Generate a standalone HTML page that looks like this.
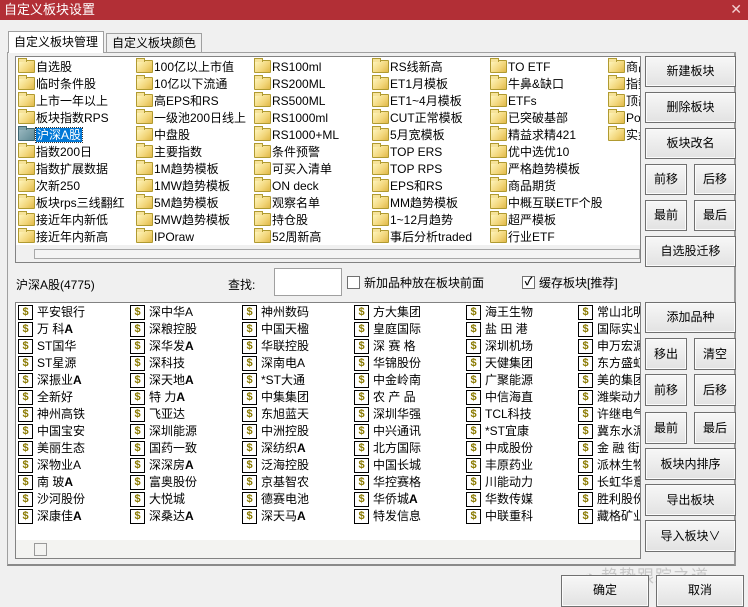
<!DOCTYPE html>
<html><head><meta charset="utf-8"><style>
*{margin:0;padding:0;box-sizing:border-box}
body{width:748px;height:604px;background:#f0f0f0;font-family:"Liberation Sans","Noto Sans CJK SC",sans-serif;font-size:12px;color:#000;position:relative;overflow:hidden}
.a{position:absolute}
.title{left:0;top:0;width:748px;height:20px;background:#b22f36;color:#fff;font-size:13px;line-height:19px;padding-left:4px}
.x{right:6px;top:1px;color:#f3d0d2;font-size:14px}
.tab{border:1px solid #a0a0a0;border-bottom:none;background:#f0f0f0;line-height:18px;padding:0 5px;font-size:12px}
.panel{left:7px;top:52px;width:729px;height:514px;border:1px solid #a0a0a0;border-right:2px solid #9a9a9a;border-bottom:2px solid #8a8a8a}
.list{background:#fff;border:1px solid #828282;overflow:hidden}
.it{position:absolute;height:17px;line-height:17px;white-space:nowrap}
.f{display:inline-block;width:17px;height:13px;vertical-align:-2px;margin-right:1px;border:1px solid #b09a30;border-radius:1px;background:linear-gradient(135deg,#fff6c0,#f2d67a 60%,#e0b848);position:relative}
.f:before{content:"";position:absolute;left:-1px;top:-3px;width:7px;height:3px;border:1px solid #b09a30;border-bottom:none;background:#f6e39a}
.fs{background:linear-gradient(135deg,#9ab8c0,#5f8a94);border-color:#3f6670}
.fs:before{background:#7ea2aa;border-color:#3f6670}
.sel{background:#0078d7;color:#fff;outline:1px dotted #333;padding:0 1px}
.col>div{height:17px;line-height:17px;position:relative;padding-left:19px}
.d{position:absolute;left:0;top:1px;width:15px;height:15px;border:1px solid #000;color:#8a7a00;font-weight:bold;font-size:11px;line-height:13px;text-align:center;font-style:normal;font-family:"Liberation Sans",sans-serif}
.btn{position:absolute;border:1px solid #707070;background:linear-gradient(#f7f7f7,#e2e2e2);text-align:center;font-size:12px;box-shadow:inset 0 0 0 1px #fbfbfb}
.cb{position:absolute;width:13px;height:13px;border:1px solid #707070;background:#fff}
</style></head><body>
<div class="a title">自定义板块设置</div>
<div class="a x">✕</div>
<div class="a tab" style="left:8px;top:31px;height:22px;line-height:21px;background:#fff;z-index:2">自定义板块管理</div>
<div class="a tab" style="left:106px;top:33px;height:19px;">自定义板块颜色</div>
<div class="a panel"></div>

<div class="a list" style="left:15px;top:56px;width:626px;height:207px">
<div style="position:relative;width:624px;height:205px;overflow:hidden">
<div class="a" style="left:0;top:188px;width:624px;height:18px;background:#f0f0f0"></div>
<div class="a" style="left:18px;top:192px;width:606px;height:10px;border:1px solid #a8a8a8;background:#f4f4f4"></div>
<div class="it" style="left:2px;top:2px"><i class="f"></i>自选股</div>
<div class="it" style="left:2px;top:19px"><i class="f"></i>临时条件股</div>
<div class="it" style="left:2px;top:36px"><i class="f"></i>上市一年以上</div>
<div class="it" style="left:2px;top:53px"><i class="f"></i>板块指数RPS</div>
<div class="it" style="left:2px;top:70px"><i class="f fs"></i><span class="sel">沪深A股</span></div>
<div class="it" style="left:2px;top:87px"><i class="f"></i>指数200日</div>
<div class="it" style="left:2px;top:104px"><i class="f"></i>指数扩展数据</div>
<div class="it" style="left:2px;top:121px"><i class="f"></i>次新250</div>
<div class="it" style="left:2px;top:138px"><i class="f"></i>板块rps三线翻红</div>
<div class="it" style="left:2px;top:155px"><i class="f"></i>接近年内新低</div>
<div class="it" style="left:2px;top:172px"><i class="f"></i>接近年内新高</div>

<div class="it" style="left:120px;top:2px"><i class="f"></i>100亿以上市值</div>
<div class="it" style="left:120px;top:19px"><i class="f"></i>10亿以下流通</div>
<div class="it" style="left:120px;top:36px"><i class="f"></i>高EPS和RS</div>
<div class="it" style="left:120px;top:53px"><i class="f"></i>一级池200日线上</div>
<div class="it" style="left:120px;top:70px"><i class="f"></i>中盘股</div>
<div class="it" style="left:120px;top:87px"><i class="f"></i>主要指数</div>
<div class="it" style="left:120px;top:104px"><i class="f"></i>1M趋势模板</div>
<div class="it" style="left:120px;top:121px"><i class="f"></i>1MW趋势模板</div>
<div class="it" style="left:120px;top:138px"><i class="f"></i>5M趋势模板</div>
<div class="it" style="left:120px;top:155px"><i class="f"></i>5MW趋势模板</div>
<div class="it" style="left:120px;top:172px"><i class="f"></i>IPOraw</div>

<div class="it" style="left:238px;top:2px"><i class="f"></i>RS100ml</div>
<div class="it" style="left:238px;top:19px"><i class="f"></i>RS200ML</div>
<div class="it" style="left:238px;top:36px"><i class="f"></i>RS500ML</div>
<div class="it" style="left:238px;top:53px"><i class="f"></i>RS1000ml</div>
<div class="it" style="left:238px;top:70px"><i class="f"></i>RS1000+ML</div>
<div class="it" style="left:238px;top:87px"><i class="f"></i>条件预警</div>
<div class="it" style="left:238px;top:104px"><i class="f"></i>可买入清单</div>
<div class="it" style="left:238px;top:121px"><i class="f"></i>ON deck</div>
<div class="it" style="left:238px;top:138px"><i class="f"></i>观察名单</div>
<div class="it" style="left:238px;top:155px"><i class="f"></i>持仓股</div>
<div class="it" style="left:238px;top:172px"><i class="f"></i>52周新高</div>

<div class="it" style="left:356px;top:2px"><i class="f"></i>RS线新高</div>
<div class="it" style="left:356px;top:19px"><i class="f"></i>ET1月模板</div>
<div class="it" style="left:356px;top:36px"><i class="f"></i>ET1~4月模板</div>
<div class="it" style="left:356px;top:53px"><i class="f"></i>CUT正常模板</div>
<div class="it" style="left:356px;top:70px"><i class="f"></i>5月宽模板</div>
<div class="it" style="left:356px;top:87px"><i class="f"></i>TOP ERS</div>
<div class="it" style="left:356px;top:104px"><i class="f"></i>TOP RPS</div>
<div class="it" style="left:356px;top:121px"><i class="f"></i>EPS和RS</div>
<div class="it" style="left:356px;top:138px"><i class="f"></i>MM趋势模板</div>
<div class="it" style="left:356px;top:155px"><i class="f"></i>1~12月趋势</div>
<div class="it" style="left:356px;top:172px"><i class="f"></i>事后分析traded</div>

<div class="it" style="left:474px;top:2px"><i class="f"></i>TO ETF</div>
<div class="it" style="left:474px;top:19px"><i class="f"></i>牛鼻&amp;缺口</div>
<div class="it" style="left:474px;top:36px"><i class="f"></i>ETFs</div>
<div class="it" style="left:474px;top:53px"><i class="f"></i>已突破基部</div>
<div class="it" style="left:474px;top:70px"><i class="f"></i>精益求精421</div>
<div class="it" style="left:474px;top:87px"><i class="f"></i>优中选优10</div>
<div class="it" style="left:474px;top:104px"><i class="f"></i>严格趋势模板</div>
<div class="it" style="left:474px;top:121px"><i class="f"></i>商品期货</div>
<div class="it" style="left:474px;top:138px"><i class="f"></i>中概互联ETF个股</div>
<div class="it" style="left:474px;top:155px"><i class="f"></i>超严模板</div>
<div class="it" style="left:474px;top:172px"><i class="f"></i>行业ETF</div>

<div class="it" style="left:592px;top:2px"><i class="f"></i>商品</div>
<div class="it" style="left:592px;top:19px"><i class="f"></i>指数</div>
<div class="it" style="left:592px;top:36px"><i class="f"></i>顶部</div>
<div class="it" style="left:592px;top:53px"><i class="f"></i>Pos</div>
<div class="it" style="left:592px;top:70px"><i class="f"></i>实盘</div>
</div></div>

<div class="a" style="left:16px;top:276px">沪深A股(4775)</div>
<div class="a" style="left:228px;top:276px">查找:</div>
<div class="a" style="left:274px;top:268px;width:68px;height:28px;background:#fff;border:1px solid #a0a0a0"></div>
<div class="cb" style="left:347px;top:276px"></div>
<div class="a" style="left:364px;top:274px">新加品种放在板块前面</div>
<div class="cb" style="left:522px;top:276px;font-size:11px;line-height:11px;text-align:center;font-weight:bold">✓</div>
<div class="a" style="left:539px;top:274px">缓存板块[推荐]</div>

<div class="a list" style="left:15px;top:302px;width:626px;height:257px">
<div style="position:relative;width:624px;height:255px;overflow:hidden">
<div class="a" style="left:0;top:237px;width:624px;height:18px;background:#f3f3f1"></div>
<div class="cb" style="left:18px;top:240px;background:transparent;border-color:#999"></div>
<div class="a" style="left:2px;top:1px;white-space:nowrap">
<div class="a col" style="left:0"><div><i class="d">$</i>平安银行</div><div><i class="d">$</i>万 科<b>A</b></div><div><i class="d">$</i>ST国华</div><div><i class="d">$</i>ST星源</div><div><i class="d">$</i>深振业<b>A</b></div><div><i class="d">$</i>全新好</div><div><i class="d">$</i>神州高铁</div><div><i class="d">$</i>中国宝安</div><div><i class="d">$</i>美丽生态</div><div><i class="d">$</i>深物业A</div><div><i class="d">$</i>南 玻<b>A</b></div><div><i class="d">$</i>沙河股份</div><div><i class="d">$</i>深康佳<b>A</b></div></div>
<div class="a col" style="left:112px"><div><i class="d">$</i>深中华A</div><div><i class="d">$</i>深粮控股</div><div><i class="d">$</i>深华发<b>A</b></div><div><i class="d">$</i>深科技</div><div><i class="d">$</i>深天地<b>A</b></div><div><i class="d">$</i>特 力<b>A</b></div><div><i class="d">$</i>飞亚达</div><div><i class="d">$</i>深圳能源</div><div><i class="d">$</i>国药一致</div><div><i class="d">$</i>深深房<b>A</b></div><div><i class="d">$</i>富奥股份</div><div><i class="d">$</i>大悦城</div><div><i class="d">$</i>深桑达<b>A</b></div></div>
<div class="a col" style="left:224px"><div><i class="d">$</i>神州数码</div><div><i class="d">$</i>中国天楹</div><div><i class="d">$</i>华联控股</div><div><i class="d">$</i>深南电A</div><div><i class="d">$</i>*ST大通</div><div><i class="d">$</i>中集集团</div><div><i class="d">$</i>东旭蓝天</div><div><i class="d">$</i>中洲控股</div><div><i class="d">$</i>深纺织<b>A</b></div><div><i class="d">$</i>泛海控股</div><div><i class="d">$</i>京基智农</div><div><i class="d">$</i>德赛电池</div><div><i class="d">$</i>深天马<b>A</b></div></div>
<div class="a col" style="left:336px"><div><i class="d">$</i>方大集团</div><div><i class="d">$</i>皇庭国际</div><div><i class="d">$</i>深 赛 格</div><div><i class="d">$</i>华锦股份</div><div><i class="d">$</i>中金岭南</div><div><i class="d">$</i>农 产 品</div><div><i class="d">$</i>深圳华强</div><div><i class="d">$</i>中兴通讯</div><div><i class="d">$</i>北方国际</div><div><i class="d">$</i>中国长城</div><div><i class="d">$</i>华控赛格</div><div><i class="d">$</i>华侨城<b>A</b></div><div><i class="d">$</i>特发信息</div></div>
<div class="a col" style="left:448px"><div><i class="d">$</i>海王生物</div><div><i class="d">$</i>盐 田 港</div><div><i class="d">$</i>深圳机场</div><div><i class="d">$</i>天健集团</div><div><i class="d">$</i>广聚能源</div><div><i class="d">$</i>中信海直</div><div><i class="d">$</i>TCL科技</div><div><i class="d">$</i>*ST宜康</div><div><i class="d">$</i>中成股份</div><div><i class="d">$</i>丰原药业</div><div><i class="d">$</i>川能动力</div><div><i class="d">$</i>华数传媒</div><div><i class="d">$</i>中联重科</div></div>
<div class="a col" style="left:560px"><div><i class="d">$</i>常山北明</div><div><i class="d">$</i>国际实业</div><div><i class="d">$</i>申万宏源</div><div><i class="d">$</i>东方盛虹</div><div><i class="d">$</i>美的集团</div><div><i class="d">$</i>潍柴动力</div><div><i class="d">$</i>许继电气</div><div><i class="d">$</i>冀东水泥</div><div><i class="d">$</i>金 融 街</div><div><i class="d">$</i>派林生物</div><div><i class="d">$</i>长虹华意</div><div><i class="d">$</i>胜利股份</div><div><i class="d">$</i>藏格矿业</div></div>
</div>
</div></div>

<div class="btn" style="left:645px;top:56px;width:91px;height:31px;line-height:29px">新建板块</div>
<div class="btn" style="left:645px;top:92px;width:91px;height:31px;line-height:29px">删除板块</div>
<div class="btn" style="left:645px;top:128px;width:91px;height:31px;line-height:29px">板块改名</div>
<div class="btn" style="left:645px;top:164px;width:42px;height:31px;line-height:29px">前移</div>
<div class="btn" style="left:694px;top:164px;width:42px;height:31px;line-height:29px">后移</div>
<div class="btn" style="left:645px;top:200px;width:42px;height:31px;line-height:29px">最前</div>
<div class="btn" style="left:694px;top:200px;width:42px;height:31px;line-height:29px">最后</div>
<div class="btn" style="left:645px;top:236px;width:91px;height:31px;line-height:29px">自选股迁移</div>
<div class="btn" style="left:645px;top:302px;width:91px;height:31px;line-height:29px">添加品种</div>
<div class="btn" style="left:645px;top:338px;width:42px;height:32px;line-height:30px">移出</div>
<div class="btn" style="left:694px;top:338px;width:42px;height:32px;line-height:30px">清空</div>
<div class="btn" style="left:645px;top:374px;width:42px;height:32px;line-height:30px">前移</div>
<div class="btn" style="left:694px;top:374px;width:42px;height:32px;line-height:30px">后移</div>
<div class="btn" style="left:645px;top:412px;width:42px;height:32px;line-height:30px">最前</div>
<div class="btn" style="left:694px;top:412px;width:42px;height:32px;line-height:30px">最后</div>
<div class="btn" style="left:645px;top:448px;width:91px;height:32px;line-height:30px">板块内排序</div>
<div class="btn" style="left:645px;top:484px;width:91px;height:32px;line-height:30px">导出板块</div>
<div class="btn" style="left:645px;top:520px;width:91px;height:32px;line-height:30px">导入板块∨</div>

<div class="a" style="left:584px;top:562px;color:#c8c8c8;font-size:17px;letter-spacing:1px">◔ 趋势跟踪之道</div>
<div class="btn" style="left:561px;top:575px;width:88px;height:32px;line-height:28px">确定</div>
<div class="btn" style="left:656px;top:575px;width:88px;height:32px;line-height:28px">取消</div>
</body></html>
